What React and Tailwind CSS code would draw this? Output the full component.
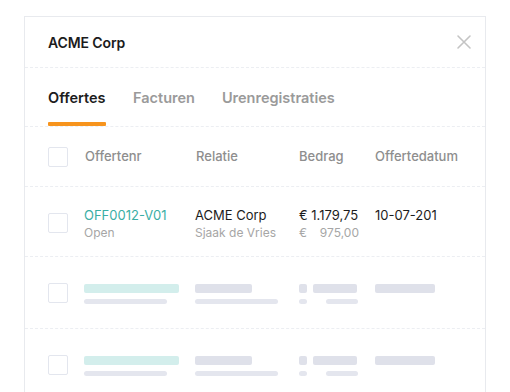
import React from 'react';

const cols = 'grid grid-cols-[36px_111px_104px_76px_1fr] items-center';

const Checkbox = () => (
    <div className="w-5 h-5 border border-[#e3e6ee] rounded-[2px] bg-white"></div>
);

const SkeletonRow = () => (
    <div className={`${cols} h-[72px] border-b border-dashed border-[#eceef2] pl-[23px]`}>
        <Checkbox />
        <div className="flex flex-col gap-[6px] pt-[2px]">
            <div className="h-[9px] w-[95px] rounded-[2px] bg-[#d3eeec]"></div>
            <div className="h-[5px] w-[83px] rounded-full bg-[#e4e6ee]"></div>
        </div>
        <div className="flex flex-col gap-[6px] pt-[2px]">
            <div className="h-[9px] w-[57px] rounded-[2px] bg-[#dfe1ea]"></div>
            <div className="h-[5px] w-[83px] rounded-full bg-[#e4e6ee]"></div>
        </div>
        <div className="flex flex-col gap-[6px] pt-[2px]">
            <div className="flex gap-[6px]">
                <div className="h-[9px] w-[8px] rounded-[2px] bg-[#dfe1ea]"></div>
                <div className="h-[9px] w-[44px] rounded-[2px] bg-[#dfe1ea]"></div>
            </div>
            <div className="flex gap-[19px]">
                <div className="h-[5px] w-[8px] rounded-full bg-[#e4e6ee]"></div>
                <div className="h-[5px] w-[32px] rounded-full bg-[#e4e6ee]"></div>
            </div>
        </div>
        <div className="flex flex-col gap-[6px] pt-[2px]">
            <div className="h-[9px] w-[60px] rounded-[2px] bg-[#dfe1ea]"></div>
            <div className="h-[5px]"></div>
        </div>
    </div>
);

export default function App() {
    return (
        <div className="w-[510px] h-[392px] bg-white overflow-hidden pt-4 pl-6 font-['Inter',sans-serif]">
            <div className="w-[462px] h-[400px] border border-b-0 border-[#e8eaee]">
                <div className="flex items-center justify-between h-[51px] pl-[23px] pr-[13px] border-b border-dashed border-[#eceef2]">
                    <h1 className="text-[14px] font-semibold text-[#1c1c1c] tracking-[-0.1px]">ACME Corp</h1>
                    <svg width="16" height="16" viewBox="0 0 16 16" className="mb-[1px]">
                        <path d="M2 2 L14 14 M14 2 L2 14" stroke="#c4c4c4" strokeWidth="1.6" strokeLinecap="round" />
                    </svg>
                </div>
                <div className="flex items-end gap-[27px] h-[59px] pl-[23px] border-b border-dashed border-[#eceef2]">
                    <div className="flex flex-col">
                        <span className="text-[14.5px] font-semibold text-[#1c1c1c] leading-none pb-[17px]">Offertes</span>
                        <div className="h-[4px] w-[58px] bg-[#f7941d] rounded-[1px]"></div>
                    </div>
                    <span className="text-[14.5px] font-semibold text-[#9a9a9a] leading-none pb-[21px]">Facturen</span>
                    <span className="text-[14.5px] font-semibold text-[#9a9a9a] leading-none pb-[21px]">Urenregistraties</span>
                </div>
                <div className={`${cols} h-[60px] border-b border-dashed border-[#eceef2] pl-[23px] text-[13px] font-medium text-[#8e8e8e]`}>
                    <Checkbox />
                    <span className="pl-[1px]">Offertenr</span>
                    <span className="pl-[1px]">Relatie</span>
                    <span>Bedrag</span>
                    <span>Offertedatum</span>
                </div>
                <div className={`${cols} h-[70px] border-b border-dashed border-[#eceef2] pl-[23px] text-[13px] pt-[2px]`}>
                    <Checkbox />
                    <div className="flex flex-col leading-[18px] pt-[3px]">
                        <span className="text-[#3aaea5]">OFF0012-V01</span>
                        <span className="text-[#a6a6a6] text-[12px]">Open</span>
                    </div>
                    <div className="flex flex-col leading-[18px] pt-[3px]">
                        <span className="text-[#1c1c1c]">ACME Corp</span>
                        <span className="text-[#a6a6a6] text-[12px]">Sjaak de Vries</span>
                    </div>
                    <div className="flex flex-col leading-[18px] pt-[3px]">
                        <span className="text-[#1c1c1c]">€ 1.179,75</span>
                        <span className="text-[#a6a6a6] text-[12px] flex justify-between w-[60px]"><span>€</span><span>975,00</span></span>
                    </div>
                    <div className="flex flex-col leading-[18px] pt-[3px]">
                        <span className="text-[#1c1c1c] whitespace-nowrap">10-07-201</span>
                        <span className="text-[12px]">&nbsp;</span>
                    </div>
                </div>
                <SkeletonRow />
                <SkeletonRow />
            </div>
        </div>
    );
}
